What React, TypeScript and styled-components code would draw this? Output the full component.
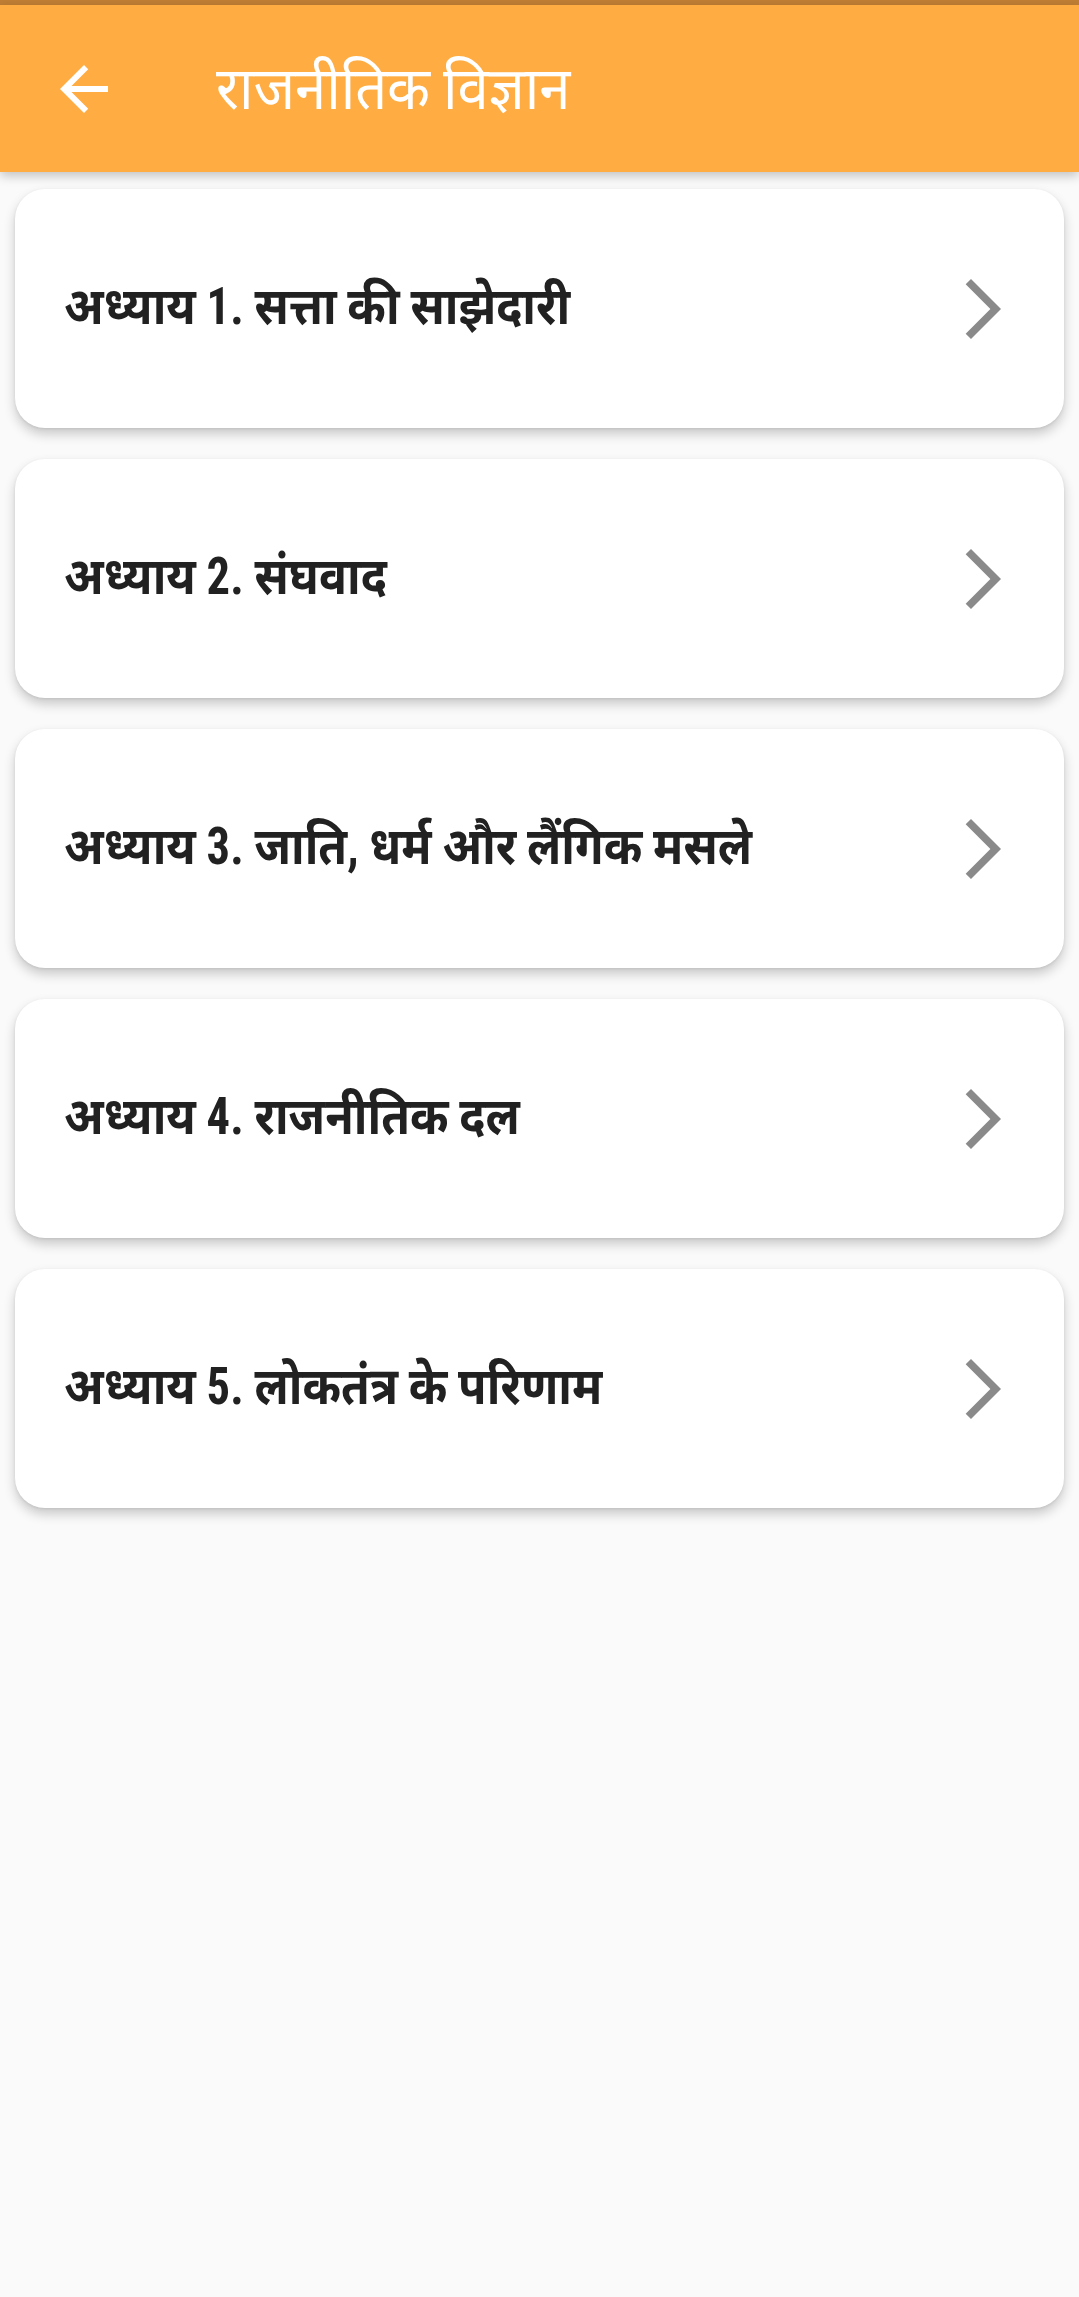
import React from "react";
import styled, { createGlobalStyle } from "styled-components";

const GlobalStyle = createGlobalStyle`
  html, body {
    margin: 0;
    padding: 0;
    background: #fafafa;
  }
  body {
    font-family: Roboto, "Noto Sans Devanagari", "Noto Sans", sans-serif;
  }
  #root {
    min-height: 100vh;
    background: #fafafa;
  }
`;

const Screen = styled.div`
  display: flex;
  flex-direction: column;
  min-height: 100vh;
  background: #fafafa;
`;

const StatusStrip = styled.div`
  height: 5px;
  background: #c07e34;
`;

const AppBar = styled.header`
  height: 167px;
  background: #ffad42;
  display: flex;
  align-items: center;
  padding-left: 48px;
  box-shadow: 0 4px 10px rgba(0, 0, 0, 0.22);
  position: relative;
  z-index: 2;
`;

const BackButton = styled.button`
  width: 72px;
  height: 72px;
  padding: 0;
  border: none;
  background: transparent;
  display: flex;
  align-items: center;
  justify-content: center;
  color: #ffffff;
`;

const Title = styled.h1`
  margin: 0 0 0 96px;
  font-size: 59px;
  font-weight: 400;
  color: #ffffff;
  line-height: 1;
  font-stretch: condensed;
  transform: scaleX(0.95);
  transform-origin: left center;
`;

const List = styled.main`
  display: flex;
  flex-direction: column;
  gap: 31px;
  padding: 17px 15px 30px;
`;

const Card = styled.div`
  height: 239px;
  background: #ffffff;
  border-radius: 30px;
  box-shadow: 0 6px 12px rgba(0, 0, 0, 0.2), 0 1px 3px rgba(0, 0, 0, 0.08);
  display: flex;
  align-items: center;
  justify-content: space-between;
  padding: 0 45px 0 49px;
`;

const CardTitle = styled.span`
  font-size: 52px;
  font-weight: 700;
  color: #212121;
  font-stretch: condensed;
  transform: scaleX(0.895);
  transform-origin: left center;
  white-space: nowrap;
  margin-top: 4px;
`;

const Chevron = styled.span`
  width: 72px;
  height: 72px;
  display: flex;
  color: #8a8a8a;
`;

const chapters = [
  "अध्याय 1. सत्ता की साझेदारी",
  "अध्याय 2. संघवाद",
  "अध्याय 3. जाति, धर्म और लैंगिक मसले",
  "अध्याय 4. राजनीतिक दल",
  "अध्याय 5. लोकतंत्र के परिणाम",
];

export default function App() {
  return (
    <Screen>
      <GlobalStyle />
      <StatusStrip />
      <AppBar>
        <BackButton aria-label="back">
          <svg width="72" height="72" viewBox="0 0 24 24" fill="currentColor">
            <path d="M20 11H7.83l5.59-5.59L12 4l-8 8 8 8 1.41-1.41L7.83 13H20v-2z" />
          </svg>
        </BackButton>
        <Title>राजनीतिक विज्ञान</Title>
      </AppBar>
      <List>
        {chapters.map((c) => (
          <Card key={c}>
            <CardTitle>{c}</CardTitle>
            <Chevron>
              <svg width="72" height="72" viewBox="0 0 24 24" fill="currentColor">
                <path d="M6.23 20.23L8 22l10-10L8 2 6.23 3.77 14.46 12z" />
              </svg>
            </Chevron>
          </Card>
        ))}
      </List>
    </Screen>
  );
}
